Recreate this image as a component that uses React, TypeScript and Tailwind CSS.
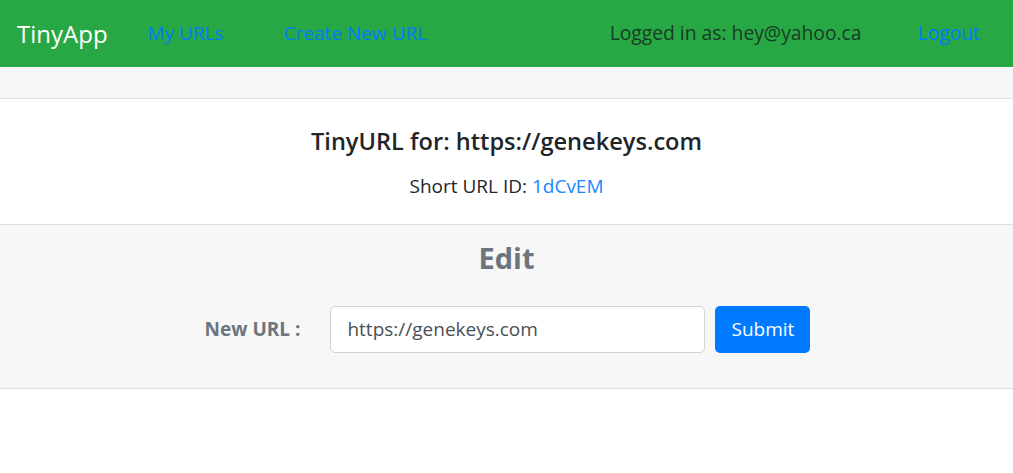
import React from "react";

export default function App() {
  const font = { fontFamily: '"Open Sans", "Noto Sans", sans-serif' };
  return (
    <div className="min-h-[473px] bg-white" style={font}>
      <nav className="flex h-[67px] items-center bg-[#28a745] pl-[17px] pr-[33px]">
        <span className="text-[24px] leading-none text-white">TinyApp</span>
        <a className="ml-[40px] text-[19px] text-[#007bff]">My URLs</a>
        <a className="ml-[60px] text-[19px] text-[#007bff]">Create New URL</a>
        <div className="flex-1" />
        <span className="text-[19.3px] text-[#173d22]">Logged in as: hey@yahoo.ca</span>
        <a className="ml-[56px] text-[19.3px] text-[#007bff]">Logout</a>
      </nav>
      <div className="h-[32px] border-b border-[#dfdfdf] bg-[#f7f7f7]" />
      <div className="flex flex-col items-center pt-[27px] pb-[24px] text-[#212529]">
        <h5 className="h-[30px] text-[23.6px] font-semibold leading-[30px]">
          TinyURL for: https://genekeys.com
        </h5>
        <p className="mt-[16px] h-[28px] text-[19px] leading-[28px]">
          Short URL ID: <a className="text-[#1a86ff]">1dCvEM</a>
        </p>
      </div>
      <div className="flex flex-col items-center border-y border-[#dfdfdf] bg-[#f7f7f7] pt-[13px] pb-[35px]">
        <h3 className="h-[40px] text-[29px] font-bold leading-[40px] text-[#6c757d]">Edit</h3>
        <div className="mt-[28px] flex items-center pl-[2px]">
          <label className="text-[19px] font-bold text-[#6c757d]">New URL :</label>
          <div className="ml-[30px] flex h-[47px] w-[375px] items-center rounded-[5px] border border-[#ced4da] bg-white pl-[16px] text-[19px] text-[#495057]">
            https://genekeys.com
          </div>
          <button className="ml-[10px] h-[47px] w-[95px] rounded-[5px] bg-[#007bff] text-[19px] text-white">
            Submit
          </button>
        </div>
      </div>
    </div>
  );
}
